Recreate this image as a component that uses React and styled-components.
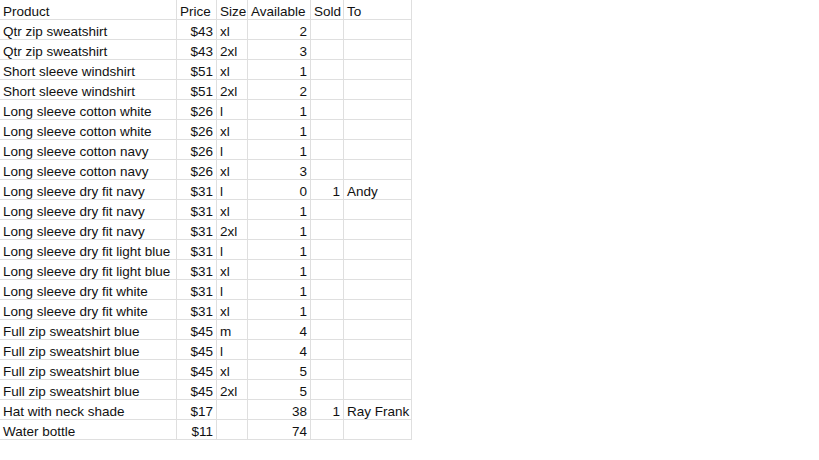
import React from "react";
import styled, { createGlobalStyle } from "styled-components";

const Global = createGlobalStyle`
  html, body { margin: 0; padding: 0; background: #ffffff; }
  body { font-family: "Liberation Sans", Arial, sans-serif; }
`;

const Sheet = styled.div`
  display: grid;
  grid-template-columns: 177px 40px 31px 63px 33px 68px;
  width: max-content;
  font-family: "Liberation Sans", Arial, sans-serif;
  font-size: 13.5px;
  color: #111;
`;

const Cell = styled.div`
  box-sizing: border-box;
  height: 20px;
  line-height: 21px;
  padding: 1px ${(p) => (p.$num ? "3px" : "2px")} 0 ${(p) => (p.$num ? "2px" : "3px")};
  border-right: 1px solid #dfdfdf;
  border-bottom: 1px solid #dfdfdf;
  text-align: ${(p) => (p.$num ? "right" : "left")};
  white-space: nowrap;
  overflow: visible;
`;

const rows = [
  ["Qtr zip sweatshirt", "$43", "xl", "2", "", ""],
  ["Qtr zip sweatshirt", "$43", "2xl", "3", "", ""],
  ["Short sleeve windshirt", "$51", "xl", "1", "", ""],
  ["Short sleeve windshirt", "$51", "2xl", "2", "", ""],
  ["Long sleeve cotton white", "$26", "l", "1", "", ""],
  ["Long sleeve cotton white", "$26", "xl", "1", "", ""],
  ["Long sleeve cotton navy", "$26", "l", "1", "", ""],
  ["Long sleeve cotton navy", "$26", "xl", "3", "", ""],
  ["Long sleeve dry fit navy", "$31", "l", "0", "1", "Andy"],
  ["Long sleeve dry fit navy", "$31", "xl", "1", "", ""],
  ["Long sleeve dry fit navy", "$31", "2xl", "1", "", ""],
  ["Long sleeve dry fit light blue", "$31", "l", "1", "", ""],
  ["Long sleeve dry fit light blue", "$31", "xl", "1", "", ""],
  ["Long sleeve dry fit white", "$31", "l", "1", "", ""],
  ["Long sleeve dry fit white", "$31", "xl", "1", "", ""],
  ["Full zip sweatshirt blue", "$45", "m", "4", "", ""],
  ["Full zip sweatshirt blue", "$45", "l", "4", "", ""],
  ["Full zip sweatshirt blue", "$45", "xl", "5", "", ""],
  ["Full zip sweatshirt blue", "$45", "2xl", "5", "", ""],
  ["Hat with neck shade", "$17", "", "38", "1", "Ray Frank"],
  ["Water bottle", "$11", "", "74", "", ""],
];

const headers = ["Product", "Price", "Size", "Available", "Sold", "To"];
const numeric = [false, true, false, true, true, false];

export default function App() {
  return (
    <>
      <Global />
      <Sheet>
        {headers.map((h) => (
          <Cell key={h}>{h}</Cell>
        ))}
        {rows.map((r, i) =>
          r.map((v, j) => (
            <Cell key={i + "-" + j} $num={numeric[j]}>
              {v}
            </Cell>
          ))
        )}
      </Sheet>
    </>
  );
}
